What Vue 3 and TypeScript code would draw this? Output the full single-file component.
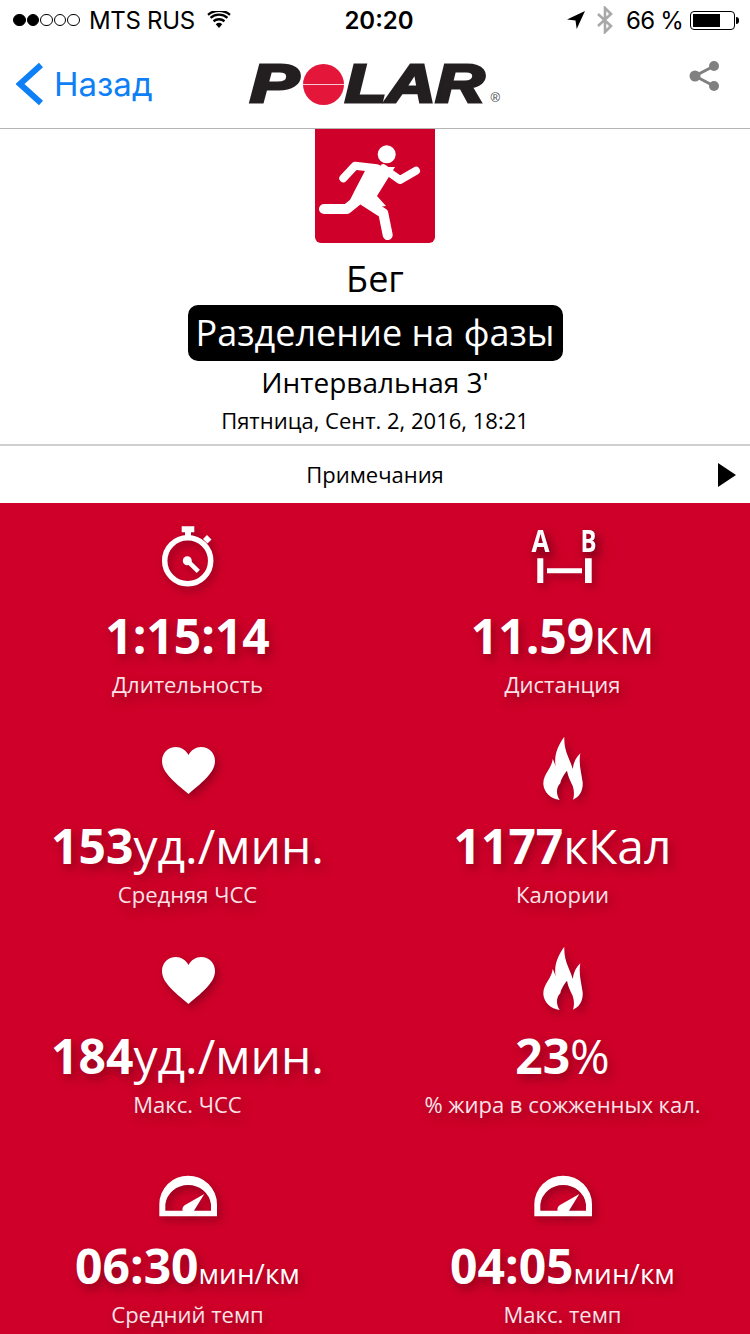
<script setup lang="ts">
type Stat = { icon: string; value: string; unit?: string; label: string }

const stats: Stat[] = [
  { icon: 'watch', value: '1:15:14', label: 'Длительность' },
  { icon: 'dist', value: '11.59', unit: 'км', label: 'Дистанция' },
  { icon: 'heart', value: '153', unit: 'уд./мин.', label: 'Средняя ЧСС' },
  { icon: 'flame', value: '1177', unit: 'кКал', label: 'Калории' },
  { icon: 'heart', value: '184', unit: 'уд./мин.', label: 'Макс. ЧСС' },
  { icon: 'flame', value: '23', unit: '%', label: '% жира в сожженных кал.' },
  { icon: 'gauge', value: '06:30', unit: 'мин/км', label: 'Средний темп' },
  { icon: 'gauge', value: '04:05', unit: 'мин/км', label: 'Макс. темп' },
]

const dots = [true, true, false, false, false]
</script>

<template>
  <div class="page">
    <div class="status">
      <div class="status-left">
        <span class="dots">
          <i v-for="(on, i) in dots" :key="i" class="dot" :class="{ on }"></i>
        </span>
        <span class="carrier">MTS RUS</span>
        <svg class="wifi" width="24" height="18" viewBox="0 0 26 20">
          <path d="M13 19l-3.600-4.400a5.600 5.600 0 0 1 7.200 0z" fill="#000" />
          <path d="M6.900 11.400a9.400 9.400 0 0 1 12.200 0M3.600 7.600a14.400 14.400 0 0 1 18.800 0M.8 4.200a18.900 18.900 0 0 1 24.400 0" fill="none" stroke="#000" stroke-width="2.600" />
        </svg>
      </div>
      <div class="status-time">20:20</div>
      <div class="status-right">
        <svg width="20" height="20" viewBox="0 0 20 20"><path d="M19 1L1 9.500l8.500 1 1.200 8.500z" fill="#000" /></svg>
        <svg class="bt" width="18" height="28" viewBox="0 0 18 28"><path d="M2 8l13 12-6 6V2l6 6L2 20" fill="none" stroke="#a8a8a8" stroke-width="2.600" /></svg>
        <span class="pct">66 %</span>
        <span class="battery"><i></i></span>
      </div>
    </div>

    <header class="nav">
      <div class="back">
        <svg width="28" height="44" viewBox="0 0 28 44"><path d="M25 3L4 22l21 19" fill="none" stroke="#0f7ff5" stroke-width="6" /></svg>
        <span>Назад</span>
      </div>
      <div class="logo">
        <span class="logo-p">P</span><i class="logo-o"></i><span class="logo-lar">LAR</span><em>®</em>
      </div>
      <svg class="share" width="34" height="32" viewBox="0 0 34 32">
        <path d="M26 6L7 16l19 10" fill="none" stroke="#808080" stroke-width="3" />
        <circle cx="26" cy="6" r="5" fill="#808080" />
        <circle cx="7" cy="16" r="5.500" fill="#808080" />
        <circle cx="26" cy="26" r="5" fill="#808080" />
      </svg>
    </header>

    <section class="summary">
      <div class="sport-icon">
        <svg width="120" height="114" viewBox="0 1 120 114">
          <circle cx="71.700" cy="26.300" r="9" fill="#fff" />
          <path d="M52 39h28L62 68l9 10-14 2-12-7-13 5 8-16z" fill="#fff" />
          <path d="M28.300 50.300L40 37.700l21.700 2.600M68.300 40.300L85 52l16-9.300" fill="none" stroke="#fff" stroke-width="8" stroke-linecap="round" stroke-linejoin="round" />
          <path d="M9 81h22.700L45 70.300l23.300 15L72.700 107" fill="none" stroke="#fff" stroke-width="10" stroke-linecap="round" stroke-linejoin="round" />
        </svg>
      </div>
      <div class="sport">Бег</div>
      <div class="phase">Разделение на фазы</div>
      <div class="name">Интервальная 3'</div>
      <div class="date">Пятница, Сент. 2, 2016, 18:21</div>
    </section>

    <div class="notes">
      <span>Примечания</span>
      <i class="arrow"></i>
    </div>

    <section class="stats">
      <div v-for="s in stats" :key="s.label" class="stat">
        <svg class="stat-icon" width="80" height="80" viewBox="0 0 80 80">
          <g v-if="s.icon === 'watch'">
            <circle cx="39.700" cy="36.700" r="23" fill="none" stroke="#fff" stroke-width="5.500" />
            <path d="M33.700 2.300h12.600v6h-3.300v4h-6v-4h-3.300zM55 15l4-4 4.500 4.500-4 4z" fill="#fff" />
            <circle cx="39.300" cy="36.700" r="4.500" fill="#fff" />
            <path d="M39.300 36.700L50.300 47.300" stroke="#fff" stroke-width="4.500" />
          </g>
          <g v-else-if="s.icon === 'dist'">
            <text class="ab" x="8.500" y="27.700" textLength="18" lengthAdjust="spacingAndGlyphs">A</text>
            <text class="ab" x="57.500" y="27.700" textLength="16" lengthAdjust="spacingAndGlyphs">B</text>
            <path d="M14.300 34.300h6V59h-6zM62 34.300h6.700V59H62zM24 44.300h35v5H24z" fill="#fff" />
          </g>
          <path v-else-if="s.icon === 'heart'" d="M40.500 60C25 47 14 38 14 27c0-8 6-14 14-14 5 0 10 3 12.500 8C43 16 48 13 53 13c8 0 14 6 14 14 0 11-11 20-26.500 33z" fill="#fff" />
          <g v-else-if="s.icon === 'flame'" transform="translate(-62 -10) scale(.3333)">
            <path d="M310 38C290 65 278 95 284 128C282 120 278 110 275 105C272 135 246 150 247 180C248 205 270 225 296 228C285 212 285 190 298 178C300 165 310 150 318 140C322 160 328 170 335 185C340 200 340 215 336 227C355 220 367 200 365 175C362 150 352 120 358 88C345 100 338 115 335 135C328 105 308 85 310 38Z" fill="#fff" />
          </g>
          <g v-else transform="translate(-108 5) scale(.3333)">
            <path fill-rule="evenodd" d="M358 172V136A86.500 86 0 0 1 531 136V172ZM376 155V136A69 66 0 0 1 513 136V155H462L493 105L435 138C428 143 426 150 428 155Z" fill="#fff" />
          </g>
        </svg>
        <div class="value">{{ s.value }}<span v-if="s.unit" class="unit" :class="{ small: s.unit === 'мин/км' }">{{ s.unit }}</span></div>
        <div class="label">{{ s.label }}</div>
      </div>
    </section>
  </div>
</template>

<style scoped>
.page {
  width: 750px;
  height: 1334px;
  overflow: hidden;
  background: #fff;
  color: #000;
  font-family: "Open Sans", "Noto Sans", sans-serif;
}

.status {
  height: 40px;
  display: grid;
  grid-template-columns: 1fr auto 1fr;
  align-items: center;
  padding: 0 15px 0 13px;
  font-family: Inter, Roboto, sans-serif;
  font-size: 24px;
}
.status-left,
.status-right {
  display: flex;
  align-items: center;
}
.status-left { gap: 9px; }
.status-right { justify-content: flex-end; }
.status-time { font-weight: 600; margin-left: 10px; }
.carrier { letter-spacing: -.3px; }
.dots { display: flex; gap: 1px; }
.dot {
  width: 12.6px;
  height: 12.6px;
  box-sizing: border-box;
  border: 1px solid #000;
  border-radius: 50%;
}
.dot.on { background: #000; }
.wifi { margin-left: 3px; }
.bt { margin: 0 12px 0 10px; }
.pct { margin-right: 7px; letter-spacing: -.8px; }
.battery {
  position: relative;
  width: 45px;
  height: 19px;
  box-sizing: border-box;
  border: 1px solid #000;
  border-radius: 4px;
  padding: 2px;
  display: flex;
}
.battery i { width: 27px; background: #000; }
.battery::after {
  content: "";
  position: absolute;
  right: -5px;
  top: 5px;
  width: 3px;
  height: 7px;
  background: #000;
  border-radius: 0 3px 3px 0;
}

.nav {
  height: 89px;
  box-sizing: border-box;
  display: grid;
  grid-template-columns: 1fr auto 1fr;
  align-items: center;
  padding: 0 16px;
  border-bottom: 1px solid #b5b5b5;
}
.back {
  display: flex;
  align-items: center;
  gap: 10px;
  color: #0f7ff5;
  font-family: Inter, Roboto, sans-serif;
  font-size: 33px;
}
.logo {
  position: relative;
  display: flex;
  align-items: center;
  width: 250px;
  height: 40px;
  color: #231f20;
  font-family: "Liberation Sans", sans-serif;
  font-size: 53px;
  font-weight: 700;
  font-style: italic;
  line-height: 40px;
  -webkit-text-stroke: 3px #231f20;
}
.logo span { display: block; flex: none; transform-origin: left; }
.logo-p { width: 53px; transform: scaleX(1.38); }
.logo-lar { width: 143px; transform: scaleX(1.28); }
.logo-o {
  flex: none;
  width: 41px;
  height: 41px;
  margin-right: 1px;
  border-radius: 50%;
  background: linear-gradient(#e4173b 0 48%, #f6c9d2 48% 52%, #e4173b 52%);
}
.logo em {
  position: absolute;
  right: 0;
  bottom: -1px;
  font-size: 13px;
  line-height: 14px;
  font-style: normal;
  font-weight: 400;
  color: #444;
  -webkit-text-stroke: 0;
}
.share { justify-self: end; margin: -16px 12px 0 0; }

.summary {
  height: 315px;
  display: flex;
  flex-direction: column;
  align-items: center;
}
.sport-icon {
  width: 120px;
  height: 114px;
  background: #cf0029;
  border-radius: 0 0 6px 6px;
}
.sport { font-size: 36px; line-height: 46px; margin-top: 13px; }
.phase {
  width: 375px;
  height: 56px;
  margin-top: 3px;
  background: #000;
  color: #fff;
  border-radius: 10px;
  font-size: 36px;
  line-height: 56px;
  text-align: center;
  white-space: nowrap;
}
.name { font-size: 28px; line-height: 40px; margin-top: 1px; }
.date { font-size: 22px; line-height: 32px; margin-top: 2px; }

.notes {
  position: relative;
  height: 59px;
  box-sizing: border-box;
  padding-bottom: 2px;
  border-top: 2px solid #d0d0d0;
  display: flex;
  align-items: center;
  justify-content: center;
  font-size: 22px;
}
.arrow {
  position: absolute;
  right: 14px;
  top: 17px;
  border-left: 18px solid #000;
  border-top: 12px solid transparent;
  border-bottom: 12px solid transparent;
}

.stats {
  height: 831px;
  background: #cf0029;
  padding-top: 21px;
  box-sizing: border-box;
  display: grid;
  grid-template-columns: 1fr 1fr;
  grid-auto-rows: 210px;
  color: #fff;
  text-shadow: 3px 5px 10px rgba(90, 0, 20, .5);
}
.stat {
  display: flex;
  flex-direction: column;
  align-items: center;
  white-space: nowrap;
}
.stat-icon {
  flex: none;
  overflow: visible;
  filter: drop-shadow(3px 4px 4px rgba(90, 0, 20, .5));
}
.ab {
  font-family: "Open Sans", sans-serif;
  font-size: 30px;
  font-weight: 700;
  fill: #fff;
}
.value {
  margin-top: -1px;
  font-size: 48px;
  font-weight: 700;
  line-height: 66px;
}
.unit { font-weight: 400; line-height: 1; }
.unit.small { font-size: 28px; }
.label { font-size: 22px; line-height: 30px; color: #fbe3e8; }
</style>
